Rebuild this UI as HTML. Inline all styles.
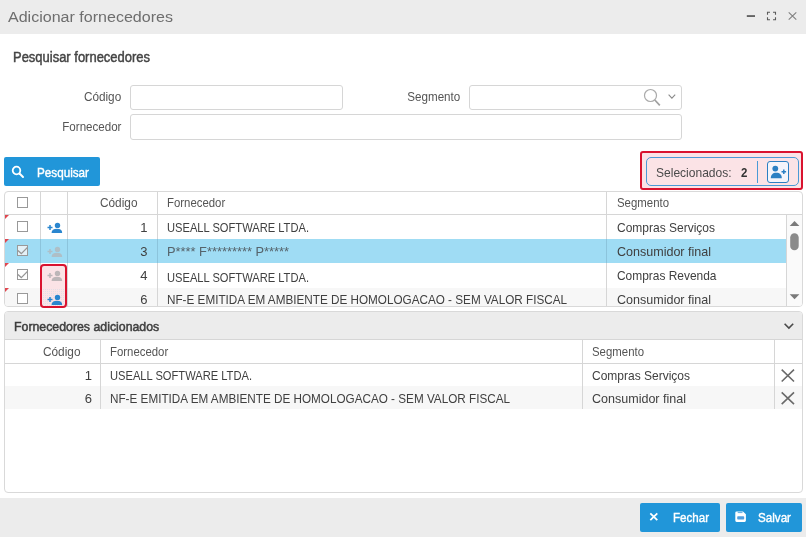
<!DOCTYPE html>
<html lang="pt-BR">
<head>
<meta charset="utf-8">
<title>Adicionar fornecedores</title>
<style>
*{box-sizing:border-box;margin:0;padding:0}
html,body{width:806px;height:537px;overflow:hidden;background:#fff}
body{position:relative;font-family:"Liberation Sans",sans-serif;font-size:13px;color:#404040}
.abs{position:absolute}
.t{position:absolute;white-space:nowrap;line-height:16px;transform-origin:0 50%}
.t.r{transform-origin:100% 50%}
#titlebar{left:0;top:0;width:806px;height:34px;background:#ececec}
#footer{left:0;top:498px;width:806px;height:39px;background:#ececec}
.inp{position:absolute;border:1px solid #d6d6d6;border-radius:3px;background:#fff}
.btn{position:absolute;background:#2196d9;border-radius:2px}
.box{position:absolute;border:1px solid #d9d9d9;background:#fff}
.vl{position:absolute;width:1px;background:#d6d6d6}
.hl{position:absolute;height:1px;background:#d6d6d6}
.cb{position:absolute;width:11px;height:11px;border:1px solid #999;background:#fff}
.bg{position:absolute}
.tri{position:absolute;width:0;height:0;border-top:4px solid #e0464f;border-right:4px solid transparent}
</style>
</head>
<body>
<!-- title bar -->
<div id="titlebar" class="abs"></div>
<svg class="abs" style="left:740px;top:8px" width="60" height="18" viewBox="0 0 60 18">
  <rect x="6.800" y="7.200" width="8.200" height="1.700" fill="#555"/>
  <path d="M27.500 6.800v-2.500h2.500M33 4.300h2.500v2.500M35.500 9.200v2.500h-2.500M30 11.700h-2.500v-2.500" fill="none" stroke="#5a5a5a" stroke-width="1.100"/>
  <path d="M48.700 4.300l7.600 7.400M56.300 4.300l-7.600 7.400" fill="none" stroke="#808080" stroke-width="1.100"/>
</svg>

<!-- search form -->
<div class="inp" style="left:130px;top:85px;width:213px;height:25px"></div>
<div class="inp" style="left:469px;top:85px;width:213px;height:25px"></div>
<svg class="abs" style="left:640px;top:86px" width="42" height="22" viewBox="0 0 42 22">
  <circle cx="10.500" cy="9.500" r="6" fill="none" stroke="#aaa" stroke-width="1.200"/>
  <path d="M14.800 14l5 5.300" stroke="#a0a0a0" stroke-width="1.700" fill="none"/>
  <path d="M28.600 8.700l3.300 3.500l3.300-3.500" stroke="#8a8a8a" stroke-width="1.100" fill="none"/>
</svg>
<div class="inp" style="left:130px;top:114px;width:552px;height:26px"></div>

<!-- Pesquisar button -->
<div class="btn" style="left:4px;top:157px;width:96px;height:29px"></div>
<svg class="abs" style="left:11px;top:165px" width="14" height="14" viewBox="0 0 14 14">
  <circle cx="5.500" cy="5.500" r="3.800" fill="none" stroke="#fff" stroke-width="1.800"/>
  <path d="M8.500 8.500l3.500 3.500" stroke="#fff" stroke-width="2" stroke-linecap="round"/>
</svg>

<!-- Selecionados -->
<div class="abs" style="left:640px;top:151px;width:163px;height:39px;border:2px solid #d9132f;border-radius:3px;background:#fbe3e6"></div>
<div class="abs" style="left:646px;top:157px;width:153px;height:29px;border:1px solid #4a9ad6;border-radius:5px"></div>
<div class="vl" style="left:757px;top:161px;height:22px;background:#4a9ad6"></div>
<div class="abs" style="left:767px;top:161px;width:22px;height:22px;border:1px solid #2b7fc3;border-radius:3px;background:#f4f4fb"></div>
<svg class="abs" style="left:770px;top:164px" width="17" height="16" viewBox="0 0 17 16">
  <circle cx="5.300" cy="4.600" r="2.900" fill="#2b7fc3"/>
  <path d="M0.800 14.200c0-3.600 2-5.500 5.500-5.500s5.500 1.900 5.500 5.500z" fill="#2b7fc3"/>
  <path d="M13.800 5.400v4.600M11.500 7.700h4.600" stroke="#2b7fc3" stroke-width="1.500"/>
</svg>

<!-- grid 1 -->
<div class="box" style="left:4px;top:191px;width:799px;height:116px;border-radius:4px"></div>
<div class="bg" style="left:5px;top:239px;width:781px;height:24px;background:#9fdcf4"></div>
<div class="bg" style="left:5px;top:288px;width:781px;height:18px;background:#f7f7f7;border-bottom-left-radius:3px"></div>
<div class="hl" style="left:5px;top:214px;width:797px"></div>
<div class="vl" style="left:40px;top:192px;height:114px"></div>
<div class="vl" style="left:67px;top:192px;height:114px"></div>
<div class="vl" style="left:157px;top:192px;height:114px"></div>
<div class="vl" style="left:606px;top:192px;height:114px"></div>
<div class="vl" style="left:786px;top:215px;height:91px"></div>
<!-- selected row separators tinted -->
<div class="vl" style="left:40px;top:239px;height:24px;background:#8cc4dc"></div>
<div class="vl" style="left:67px;top:239px;height:24px;background:#8cc4dc"></div>
<div class="vl" style="left:157px;top:239px;height:24px;background:#8cc4dc"></div>
<div class="vl" style="left:606px;top:239px;height:24px;background:#8cc4dc"></div>
<!-- checkboxes -->
<div class="cb" style="left:17px;top:197px"></div>
<div class="cb" style="left:17px;top:221px"></div>
<div class="cb" style="left:17px;top:245px;background:#e4f1f7"></div>
<div class="cb" style="left:17px;top:269px"></div>
<div class="cb" style="left:17px;top:293px"></div>
<svg class="abs" style="left:17px;top:245px" width="11" height="11" viewBox="0 0 11 11"><path d="M0.900 5.600l3.400 3l6.400-6.400" fill="none" stroke="#969696" stroke-width="1.300"/></svg>
<svg class="abs" style="left:17px;top:269px" width="11" height="11" viewBox="0 0 11 11"><path d="M0.900 5.600l3.400 3l6.400-6.400" fill="none" stroke="#969696" stroke-width="1.300"/></svg>
<!-- red corner marks -->
<div class="tri" style="left:5px;top:215px"></div>
<div class="tri" style="left:5px;top:239px"></div>
<div class="tri" style="left:5px;top:263px"></div>
<div class="tri" style="left:5px;top:288px"></div>
<!-- red highlight over action col -->
<div class="abs" style="left:40px;top:264px;width:27px;height:44px;border:2px solid #d9132f;border-radius:4px;background:#fbe3e6"></div>
<div class="abs" style="left:42px;top:289px;width:23px;height:17px;background-image:conic-gradient(#e3dfe6 25%,transparent 0);background-size:2px 2px"></div>
<!-- add-user icons -->
<svg class="abs" style="left:46px;top:221px" width="17" height="13" viewBox="0 0 17 13"><circle cx="11.500" cy="4.400" r="2.700" fill="#2a86cf"/><path d="M5.600 11.900c0-2.900 2-4.200 5.400-4.200s5.200 1.300 5.200 4.200z" fill="#2a86cf"/><path d="M4 4v5M1.500 6.500h5" stroke="#2a86cf" stroke-width="1.500" fill="none"/></svg>
<svg class="abs" style="left:46px;top:245px" width="17" height="13" viewBox="0 0 17 13"><circle cx="11.500" cy="4.400" r="2.700" fill="#aebfc7"/><path d="M5.600 11.900c0-2.900 2-4.200 5.400-4.200s5.200 1.300 5.200 4.200z" fill="#aebfc7"/><path d="M4 4v5M1.500 6.500h5" stroke="#aebfc7" stroke-width="1.500" fill="none"/></svg>
<svg class="abs" style="left:46px;top:269px" width="17" height="13" viewBox="0 0 17 13"><circle cx="11.500" cy="4.400" r="2.700" fill="#bdb6b8"/><path d="M5.600 11.900c0-2.900 2-4.200 5.400-4.200s5.200 1.300 5.200 4.200z" fill="#bdb6b8"/><path d="M4 4v5M1.500 6.500h5" stroke="#bdb6b8" stroke-width="1.500" fill="none"/></svg>
<svg class="abs" style="left:46px;top:293px" width="17" height="13" viewBox="0 0 17 13"><circle cx="11.500" cy="4.400" r="2.700" fill="#2a86cf"/><path d="M5.600 11.900c0-2.900 2-4.200 5.400-4.200s5.200 1.300 5.200 4.200z" fill="#2a86cf"/><path d="M4 4v5M1.500 6.500h5" stroke="#2a86cf" stroke-width="1.500" fill="none"/></svg>

<!-- scrollbar -->
<div class="bg" style="left:787px;top:215px;width:15px;height:91px;background:#fafafa;border-bottom-right-radius:3px"></div>
<svg class="abs" style="left:787px;top:216px" width="15" height="90" viewBox="0 0 15 90">
  <path d="M2.700 10l4.850-5l4.850 5z" fill="#7a7a7a"/>
  <rect x="3.200" y="17.200" width="8.500" height="17" rx="4.250" fill="#8a8a8a"/>
  <path d="M2.700 78.200l4.850 5l4.850-5z" fill="#7a7a7a"/>
</svg>

<!-- panel 2 -->
<div class="box" style="left:4px;top:311px;width:799px;height:182px;border-radius:4px"></div>
<div class="bg" style="left:5px;top:312px;width:797px;height:27px;background:#ececec;border-radius:3px 3px 0 0"></div>
<div class="hl" style="left:5px;top:339px;width:797px"></div>
<div class="hl" style="left:5px;top:363px;width:797px"></div>
<div class="bg" style="left:5px;top:386px;width:797px;height:23px;background:#f7f7f7"></div>
<div class="vl" style="left:100px;top:340px;height:69px"></div>
<div class="vl" style="left:582px;top:340px;height:69px"></div>
<div class="vl" style="left:774px;top:340px;height:69px"></div>
<svg class="abs" style="left:780px;top:367.500px" width="16" height="38" viewBox="0 0 16 38">
  <path d="M1.700 1.700l12.300 11.800M14 1.700l-12.300 11.800" fill="none" stroke="#6a6a6a" stroke-width="1.600"/>
  <path d="M1.700 24.400l12.300 11.800M14 24.400l-12.300 11.800" fill="none" stroke="#6a6a6a" stroke-width="1.600"/>
</svg>
<svg class="abs" style="left:783px;top:322px" width="12" height="8" viewBox="0 0 12 8"><path d="M1.600 1.700l4.300 4.300l4.300-4.300" fill="none" stroke="#4a4a4a" stroke-width="1.600"/></svg>

<!-- footer -->
<div id="footer" class="abs"></div>
<div class="btn" style="left:640px;top:503px;width:80px;height:29px"></div>
<div class="btn" style="left:726px;top:503px;width:76px;height:29px"></div>
<svg class="abs" style="left:649px;top:512.300px" width="10" height="10" viewBox="0 0 10 10"><path d="M1.300 1.300l7 6.800M8.300 1.300l-7 6.800" stroke="#fff" stroke-width="1.800" fill="none"/></svg>
<svg class="abs" style="left:734.500px;top:511px" width="12" height="12" viewBox="0 0 12 12">
  <path d="M0.300 1.800a1.300 1.300 0 0 1 1.300-1.300h6.400l2.900 2.700v6.400a1.300 1.300 0 0 1-1.300 1.300h-8a1.300 1.300 0 0 1-1.300-1.300z" fill="#fff"/>
  <rect x="2.200" y="5.300" width="7" height="3.300" rx="0.800" fill="#4f9fe0"/>
  <rect x="2.700" y="0.900" width="4.800" height="1.200" fill="#6fb5e6"/>
</svg>

<!-- texts -->
<div id="texts" style="position:absolute;left:0;top:0;width:806px;height:537px;will-change:transform">
<div class="t" id="t_title" style="left:8px;top:7.8px;font-size:15.5px;color:#6e6e6e;line-height:18px;transform:scaleX(1.0351)">Adicionar fornecedores</div>
<div class="t" id="t_head" style="left:13px;top:49px;color:#444;font-size:14px;-webkit-text-stroke:0.45px #444;transform:scaleX(0.9265)">Pesquisar fornecedores</div>
<div class="t r" id="t_cod" style="right:685.2px;top:89px;color:#555;transform:scaleX(0.9053)">Código</div>
<div class="t r" id="t_seg" style="right:346px;top:89px;color:#555;transform:scaleX(0.8943)">Segmento</div>
<div class="t r" id="t_for" style="right:685px;top:119px;color:#555;transform:scaleX(0.8904)">Fornecedor</div>
<div class="t" id="t_pesq" style="left:37px;top:164.7px;color:#fff;-webkit-text-stroke:0.4px #fff;transform:scaleX(0.8995)">Pesquisar</div>
<div class="t" id="t_sel" style="left:656px;top:165px;color:#4a4a4a;transform:scaleX(0.9257)">Selecionados:</div>
<div class="t" id="t_two" style="left:741.3px;top:165px;color:#333;font-weight:bold;transform:scaleX(0.8847)">2</div>
<div class="t" id="t_g1hc" style="left:100px;top:195px;color:#555;transform:scaleX(0.9101)">Código</div>
<div class="t" id="t_g1hf" style="left:167.4px;top:195px;color:#555;transform:scaleX(0.8754)">Fornecedor</div>
<div class="t" id="t_g1hs" style="left:616.5px;top:195px;color:#555;transform:scaleX(0.8774)">Segmento</div>
<div class="t r" id="t_g1r1c" style="right:658.5px;top:220.2px">1</div>
<div class="t" id="t_g1r1f" style="left:167.4px;top:220.2px;transform:scaleX(0.8571)">USEALL SOFTWARE LTDA.</div>
<div class="t" id="t_g1r1s" style="left:616.5px;top:220.2px;transform:scaleX(0.9228)">Compras Serviços</div>
<div class="t r" id="t_g1r2c" style="right:658.5px;top:244.2px">3</div>
<div class="t" id="t_g1r2f" style="left:167.4px;top:244.2px;color:#56646c;transform:scaleX(0.9872)">P**** F********* P*****</div>
<div class="t" id="t_g1r2s" style="left:616.5px;top:244.2px;transform:scaleX(0.9636)">Consumidor final</div>
<div class="t r" id="t_g1r3c" style="right:658.5px;top:268.2px">4</div>
<div class="t" id="t_g1r3f" style="left:167px;top:270.2px;transform:scaleX(0.8571)">USEALL SOFTWARE LTDA.</div>
<div class="t" id="t_g1r3s" style="left:616.5px;top:268.2px;transform:scaleX(0.9180)">Compras Revenda</div>
<div class="t r" id="t_g1r4c" style="right:658.5px;top:292.2px">6</div>
<div class="t" id="t_g1r4f" style="left:167.4px;top:292.2px;transform:scaleX(0.9009)">NF-E EMITIDA EM AMBIENTE DE HOMOLOGACAO - SEM VALOR FISCAL</div>
<div class="t" id="t_g1r4s" style="left:616.5px;top:292.2px;transform:scaleX(0.9636)">Consumidor final</div>
<div class="t" id="t_p2t" style="left:13.8px;top:319px;color:#3e3e3e;-webkit-text-stroke:0.5px #3e3e3e;transform:scaleX(0.9477)">Fornecedores adicionados</div>
<div class="t" id="t_g2hc" style="left:43.2px;top:344px;color:#555;transform:scaleX(0.9101)">Código</div>
<div class="t" id="t_g2hf" style="left:110.3px;top:344px;color:#555;transform:scaleX(0.8754)">Fornecedor</div>
<div class="t" id="t_g2hs" style="left:592px;top:344px;color:#555;transform:scaleX(0.8774)">Segmento</div>
<div class="t r" id="t_g2r1c" style="right:714px;top:368.0px">1</div>
<div class="t" id="t_g2r1f" style="left:110.3px;top:368.0px;transform:scaleX(0.8571)">USEALL SOFTWARE LTDA.</div>
<div class="t" id="t_g2r1s" style="left:592px;top:368.0px;transform:scaleX(0.9228)">Compras Serviços</div>
<div class="t r" id="t_g2r2c" style="right:714px;top:391.0px">6</div>
<div class="t" id="t_g2r2f" style="left:110.3px;top:391.0px;transform:scaleX(0.9009)">NF-E EMITIDA EM AMBIENTE DE HOMOLOGACAO - SEM VALOR FISCAL</div>
<div class="t" id="t_g2r2s" style="left:592px;top:391.0px;transform:scaleX(0.9636)">Consumidor final</div>
<div class="t" id="t_fech" style="left:673px;top:509.7px;color:#fff;-webkit-text-stroke:0.4px #fff;transform:scaleX(0.8896)">Fechar</div>
<div class="t" id="t_salv" style="left:758.2px;top:509.7px;color:#fff;-webkit-text-stroke:0.4px #fff;transform:scaleX(0.8953)">Salvar</div>
</div>
</body>
</html>
